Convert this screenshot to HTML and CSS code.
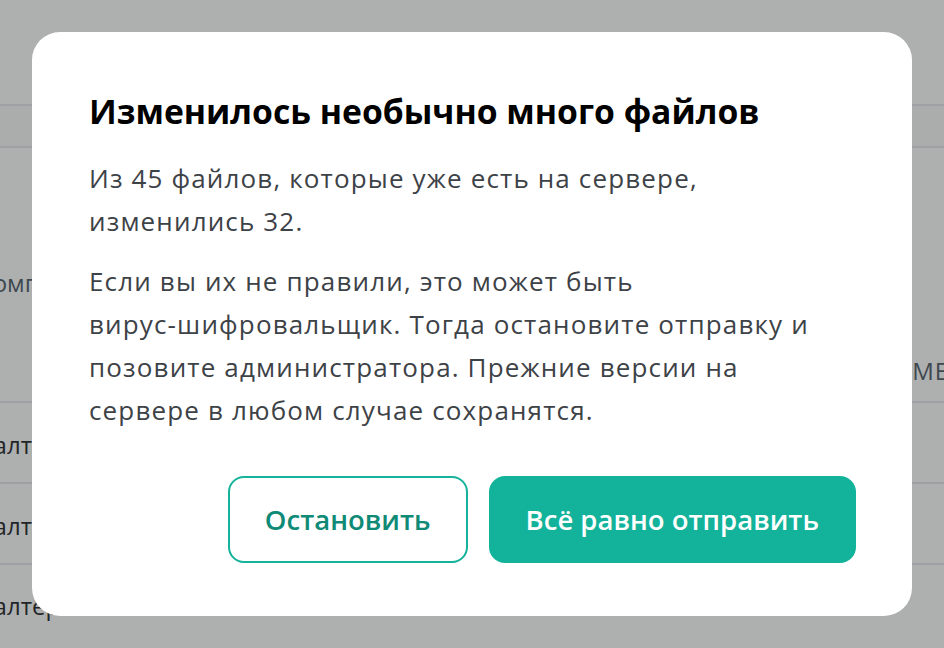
FILE: index.html
```html
<!DOCTYPE html>
<html lang="ru">
<head>
<meta charset="utf-8">
<title>Изменилось необычно много файлов</title>
<link rel="stylesheet" href="styles.css">
</head>
<body>
<div class="page">
  <div class="topbar"></div>
  <div class="band"></div>
  <div class="thead">
    <div class="th th-first">Компьютер</div>
    <div class="th th-last">ВРЕМЕНА</div>
  </div>
  <div class="row"><span class="c1">Бухгалтер</span><span class="c2">2023</span><span class="c3">60</span><span class="c4">0</span></div>
  <div class="row"><span class="c1">Бухгалтер</span><span class="c2">2023</span><span class="c3">60</span><span class="c4">0</span></div>
  <div class="row last"><span class="c1">Бухгалтер</span><span class="c2">2023</span><span class="c3">60</span><span class="c4">0</span></div>
</div>

<div class="overlay">
  <div class="modal" role="dialog" aria-labelledby="dlg-title">
    <h2 class="modal-title" id="dlg-title">Изменилось необычно много файлов</h2>
    <p class="modal-text">Из 45 файлов, которые уже есть на сервере, изменились 32.</p>
    <p class="modal-text">Если вы их не правили, это может быть <span class="nowrap">вирус-шифровальщик.</span> Тогда остановите отправку и позовите администратора. Прежние версии на сервере в любом случае сохранятся.</p>
    <div class="actions">
      <button class="btn btn-outline" type="button">Остановить</button>
      <button class="btn btn-primary" type="button">Всё равно отправить</button>
    </div>
  </div>
</div>
</body>
</html>
```

FILE: styles.css
```css
html, body {
  margin: 0;
  padding: 0;
  height: 100%;
  overflow: hidden;
}

body {
  background: #ffffff;
  font-family: "Open Sans", "Noto Sans", sans-serif;
  color: #1f2328;
}

.page {
  width: 1000px;
  margin-left: -56px;
  font-size: 24px;
}

.topbar {
  height: 106px;
  border-bottom: 2px solid #e6e8ea;
  box-sizing: border-box;
}

.band {
  height: 42px;
  background: #fafbfb;
  border-bottom: 2px solid #e6e8ea;
  box-sizing: border-box;
}

.thead {
  height: 255px;
  display: flex;
  border-bottom: 2px solid #e6e8ea;
  box-sizing: border-box;
  color: #4f5b68;
}

.th-first {
  padding: 118px 0 0 34px;
}

.th-last {
  margin-left: auto;
  margin-right: -40px;
  padding-top: 206px;
  letter-spacing: 1px;
  white-space: nowrap;
}

.row {
  height: 81px;
  display: flex;
  align-items: center;
  border-bottom: 2px solid #e6e8ea;
  box-sizing: border-box;
  padding-top: 4px;
}

.row.last {
  border-bottom: 0;
  padding-top: 0;
}

.c1 { width: 168px; }
.c2 { width: 453px; }
.c3 { width: 200px; }
.c4 { width: 100px; }

.overlay {
  position: fixed;
  inset: 0;
  background: rgba(34, 40, 40, 0.37);
  display: flex;
  align-items: center;
  justify-content: center;
}

.modal {
  width: 880px;
  box-sizing: border-box;
  background: #ffffff;
  border-radius: 28px;
  padding: 58px 56px 53px 57px;
}

.modal-title {
  margin: 0 0 25px;
  font-size: 33.7px;
  line-height: 42px;
  font-weight: 700;
  color: #000000;
}

.modal-text {
  max-width: 742px;
  margin: 0 0 17px;
  font-size: 26px;
  line-height: 43px;
  letter-spacing: 1.15px;
  color: #3d4247;
  text-wrap: pretty;
}

.nowrap {
  white-space: nowrap;
}

.actions {
  margin-top: 44px;
  display: flex;
  justify-content: flex-end;
  gap: 21px;
}

.btn {
  height: 87px;
  box-sizing: border-box;
  border-radius: 16px;
  padding: 0 35px;
  font-family: "Open Sans", "Noto Sans", sans-serif;
  font-size: 27.5px;
  font-weight: 600;
  cursor: pointer;
}

.btn-outline {
  background: #ffffff;
  border: 2px solid #14b39b;
  color: #0e8a76;
}

.btn-primary {
  background: #12b39a;
  border: 2px solid #12b39a;
  color: #ffffff;
}
```
